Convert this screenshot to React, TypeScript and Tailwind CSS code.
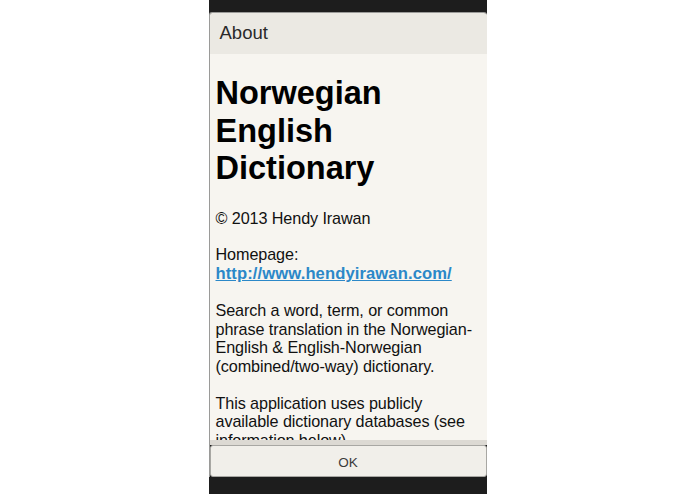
export default function App() {
  return (
    <div className="w-[695px] h-[494px] bg-white flex justify-center" style={{ fontFamily: '"Liberation Sans", Arial, sans-serif' }}>
      <div className="w-[278px] h-full bg-[#1d1d1d] pt-[12px] pb-[17px] flex">
        <div className="flex-1 flex flex-col rounded-t-[3px] border-l border-t border-[#9a9a98] overflow-hidden">
          <div className="h-[41px] shrink-0 bg-[#ebe9e3] flex items-center pl-[10px] pb-[1px]">
            <span className="text-[18.5px] text-[#2a2a2a]">About</span>
          </div>
          <div className="flex-1 overflow-hidden bg-[#f7f5f0] pl-[6px] pr-[2px] text-[#111]">
            <h1 className="mt-[21px] mb-[21px] text-[32.5px] leading-[37.5px] font-bold text-black">
              Norwegian English Dictionary
            </h1>
            <div className="text-[16.2px] leading-[18.8px] tracking-[-0.1px]">
              <p className="mb-[17.5px]">© 2013 Hendy Irawan</p>
              <p className="mb-[17.5px]">
                Homepage:
                <br />
                <a href="#" className="font-bold underline text-[#2b88c8] text-[16.6px] tracking-[0.1px]">http://www.hendyirawan.com/</a>
              </p>
              <p className="mb-[17.5px]">
                Search a word, term, or common phrase translation in the Norwegian-English &amp; English-Norwegian (combined/two-way) dictionary.
              </p>
              <p className="mb-[17.5px]">
                This application uses publicly available dictionary databases (see information below).
              </p>
            </div>
          </div>
          <div className="h-[5px] shrink-0 bg-[#dcd9d3]" />
          <button className="h-[32px] shrink-0 bg-[#f1efea] border border-[#a8a7a3] rounded-[3px] text-[13.5px] text-[#3a3a3a] flex items-center justify-center pt-[5px]">
            OK
          </button>
        </div>
      </div>
    </div>
  );
}
